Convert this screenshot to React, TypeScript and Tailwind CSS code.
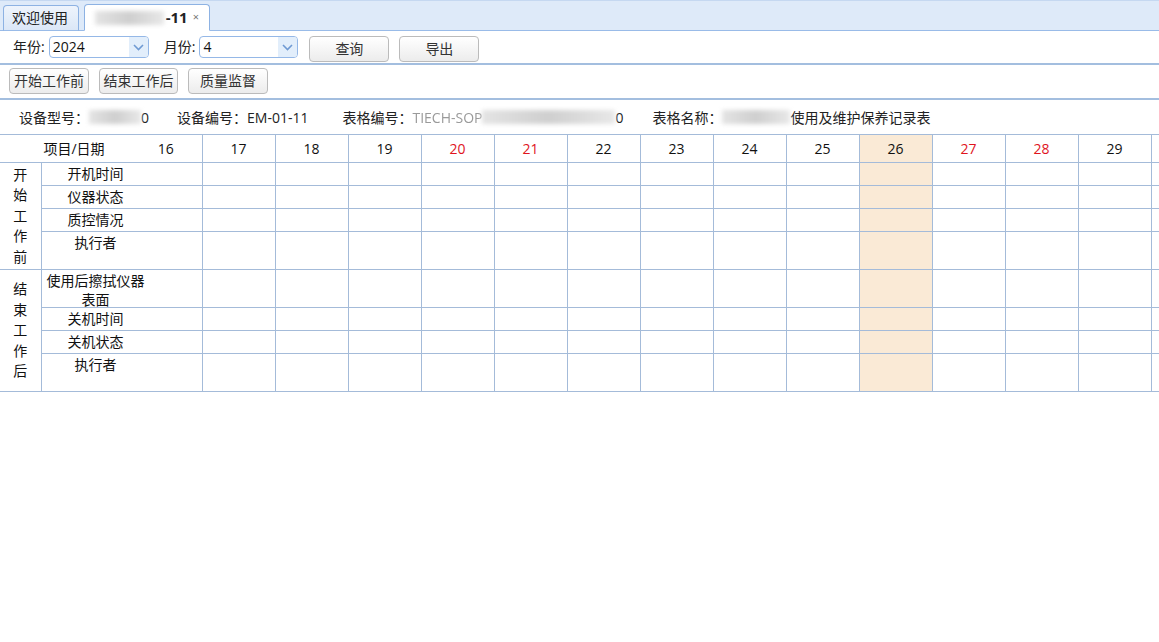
import React from "react";

const FONT = { fontFamily: '"Open Sans", "Noto Sans CJK SC", sans-serif' };

function Chevron() {
  return (
    <svg width="11" height="7" viewBox="0 0 11 7" fill="none">
      <path d="M1 1 L5.5 5.5 L10 1" stroke="#6f9ad3" strokeWidth="1.6" />
    </svg>
  );
}

function Select({ value, width }: { value: string; width: string }) {
  return (
    <div className={`${width} h-[22px] border border-[#95b8e7] rounded-[4px] bg-white flex items-stretch overflow-hidden`}>
      <div className="flex-1 pl-[3px] text-[14px] leading-[20px] text-[#111]">{value}</div>
      <div className="w-[19px] bg-[#e2eefb] flex items-center justify-center">
        <Chevron />
      </div>
    </div>
  );
}

function Btn({ label, className = "" }: { label: string; className?: string }) {
  return (
    <div
      className={`h-[26px] border border-[#bbbbbb] rounded-[4px] bg-gradient-to-b from-[#ffffff] to-[#ececec] text-[14px] leading-[24px] text-[#333] text-center ${className}`}
    >
      {label}
    </div>
  );
}

function Blur({ w, className = "" }: { w: string; className?: string }) {
  return (
    <span
      className={`inline-block ${w} h-[14px] align-middle blur-[2px] bg-gradient-to-r from-[#e4e4e4] via-[#cfcfcf] to-[#e8e8e8] ${className}`}
    />
  );
}

const days = [17, 18, 19, 20, 21, 22, 23, 24, 25, 26, 27, 28, 29, 30];
const red = new Set([20, 21, 27, 28]);

function DayCells() {
  return (
    <>
      {days.map((d) => (
        <td
          key={d}
          className={`border border-[#a4bbd9] ${d === 26 ? "bg-[#faead6]" : ""}`}
        />
      ))}
    </>
  );
}

function ItemCell({ label }: { label: React.ReactNode }) {
  return (
    <td colSpan={2} className="border border-[#a4bbd9] align-top p-0">
      <div className="h-[20px] overflow-visible text-center pr-[54px] pl-[2px] leading-[19px] pt-[1px]">
        {label}
      </div>
    </td>
  );
}

function Group({ chars, rowSpan }: { chars: string; rowSpan: number }) {
  return (
    <td rowSpan={rowSpan} className="border border-[#a4bbd9] border-l-0 align-middle text-center">
      <div className="flex flex-col items-center leading-[20.5px]">
        {chars.split("").map((c, i) => (
          <span key={i}>{c}</span>
        ))}
      </div>
    </td>
  );
}

export default function App() {
  return (
    <div className="w-[1159px] h-[642px] bg-white overflow-hidden text-[14px] text-[#222]" style={FONT}>
      {/* tab bar */}
      <div className="h-[31px] bg-[#deeaf9] border-b border-[#99bbe8] flex items-end pl-[3px] gap-[5px] border-t border-t-[#c5d8f1]">
        <div className="h-[26px] -mb-px px-[8px] border border-[#8db2e3] border-b-[#99bbe8] rounded-t-[4px] bg-gradient-to-b from-[#eef4fc] to-[#dbe7f7] leading-[24px] text-[#222] w-[76px]">
          欢迎使用
        </div>
        <div className="h-[27px] -mb-px px-[10px] border border-[#8db2e3] border-b-white rounded-t-[4px] bg-white flex items-center w-[126px]">
          <Blur w="w-[72px]" className="from-[#c9d2df] via-[#7f8ca6] to-[#9aa5ba]" />
          <span className="font-bold text-[#222] text-[15px] ml-[2px]">-11</span>
          <span className="text-[#777] text-[11px] ml-[5px]">×</span>
        </div>
      </div>

      {/* toolbar 1 */}
      <div className="h-[34px] border-b-2 border-[#a3bedf] flex items-start pt-[5px]">
        <span className="ml-[13px] mr-[4px] leading-[22px]">年份:</span>
        <Select value="2024" width="w-[100px]" />
        <span className="ml-[15px] mr-[4px] leading-[22px]">月份:</span>
        <Select value="4" width="w-[99px]" />
        <Btn label="查询" className="w-[80px] ml-[11px]" />
        <Btn label="导出" className="w-[80px] ml-[10px]" />
      </div>

      {/* toolbar 2 */}
      <div className="h-[35px] border-b-2 border-[#a3bedf] flex items-start pt-[3px] pl-[9px] gap-[10px]">
        <Btn label="开始工作前" className="w-[80px]" />
        <Btn label="结束工作后" className="w-[79px]" />
        <Btn label="质量监督" className="w-[80px]" />
      </div>

      {/* info */}
      <div className="h-[34px] flex items-center pl-[19px] whitespace-nowrap">
        <span>设备型号：</span>
        <Blur w="w-[52px]" />
        <span className="mr-[28px]">0</span>
        <span>设备编号：EM-01-11</span>
        <span className="ml-[34px]">表格编号：</span>
        <span className="text-[#9a9a9a] blur-[0.6px]">TIECH-SOP</span>
        <Blur w="w-[133px]" />
        <span className="mr-[29px]">0</span>
        <span>表格名称：</span>
        <Blur w="w-[68px]" className="from-[#e0e0e0] via-[#a8a8a8] to-[#d8dcd6]" />
        <span>使用及维护保养记录表</span>
      </div>

      {/* table */}
      <table className="border-collapse table-fixed w-[1224px] text-[14px] text-[#111]">
        <colgroup>
          <col className="w-[41px]" />
          <col className="w-[107px]" />
          <col className="w-[54px]" />
          {days.map((d) => (
            <col key={d} className="w-[73px]" />
          ))}
        </colgroup>
        <tbody>
          <tr className="h-[28px]">
            <td colSpan={2} className="border-t border-b border-[#a4bbd9] text-center">
              项目/日期
            </td>
            <td className="border border-[#a4bbd9] border-l-0 text-center pr-[18px]">16</td>
            {days.map((d) => (
              <td
                key={d}
                className={`border border-[#a4bbd9] text-center ${d === 26 ? "bg-[#faead6]" : ""} ${red.has(d) ? "text-[#e0141e]" : ""}`}
              >
                {d === 30 ? "" : d}
              </td>
            ))}
          </tr>
          <tr className="h-[23px]">
            <Group chars="开始工作前" rowSpan={4} />
            <ItemCell label="开机时间" />
            <DayCells />
          </tr>
          <tr className="h-[23px]">
            <ItemCell label="仪器状态" />
            <DayCells />
          </tr>
          <tr className="h-[23px]">
            <ItemCell label="质控情况" />
            <DayCells />
          </tr>
          <tr className="h-[38px]">
            <ItemCell label="执行者" />
            <DayCells />
          </tr>
          <tr className="h-[38px]">
            <Group chars="结束工作后" rowSpan={4} />
            <ItemCell label="使用后擦拭仪器表面" />
            <DayCells />
          </tr>
          <tr className="h-[23px]">
            <ItemCell label="关机时间" />
            <DayCells />
          </tr>
          <tr className="h-[23px]">
            <ItemCell label="关机状态" />
            <DayCells />
          </tr>
          <tr className="h-[38px]">
            <ItemCell label="执行者" />
            <DayCells />
          </tr>
        </tbody>
      </table>
    </div>
  );
}
